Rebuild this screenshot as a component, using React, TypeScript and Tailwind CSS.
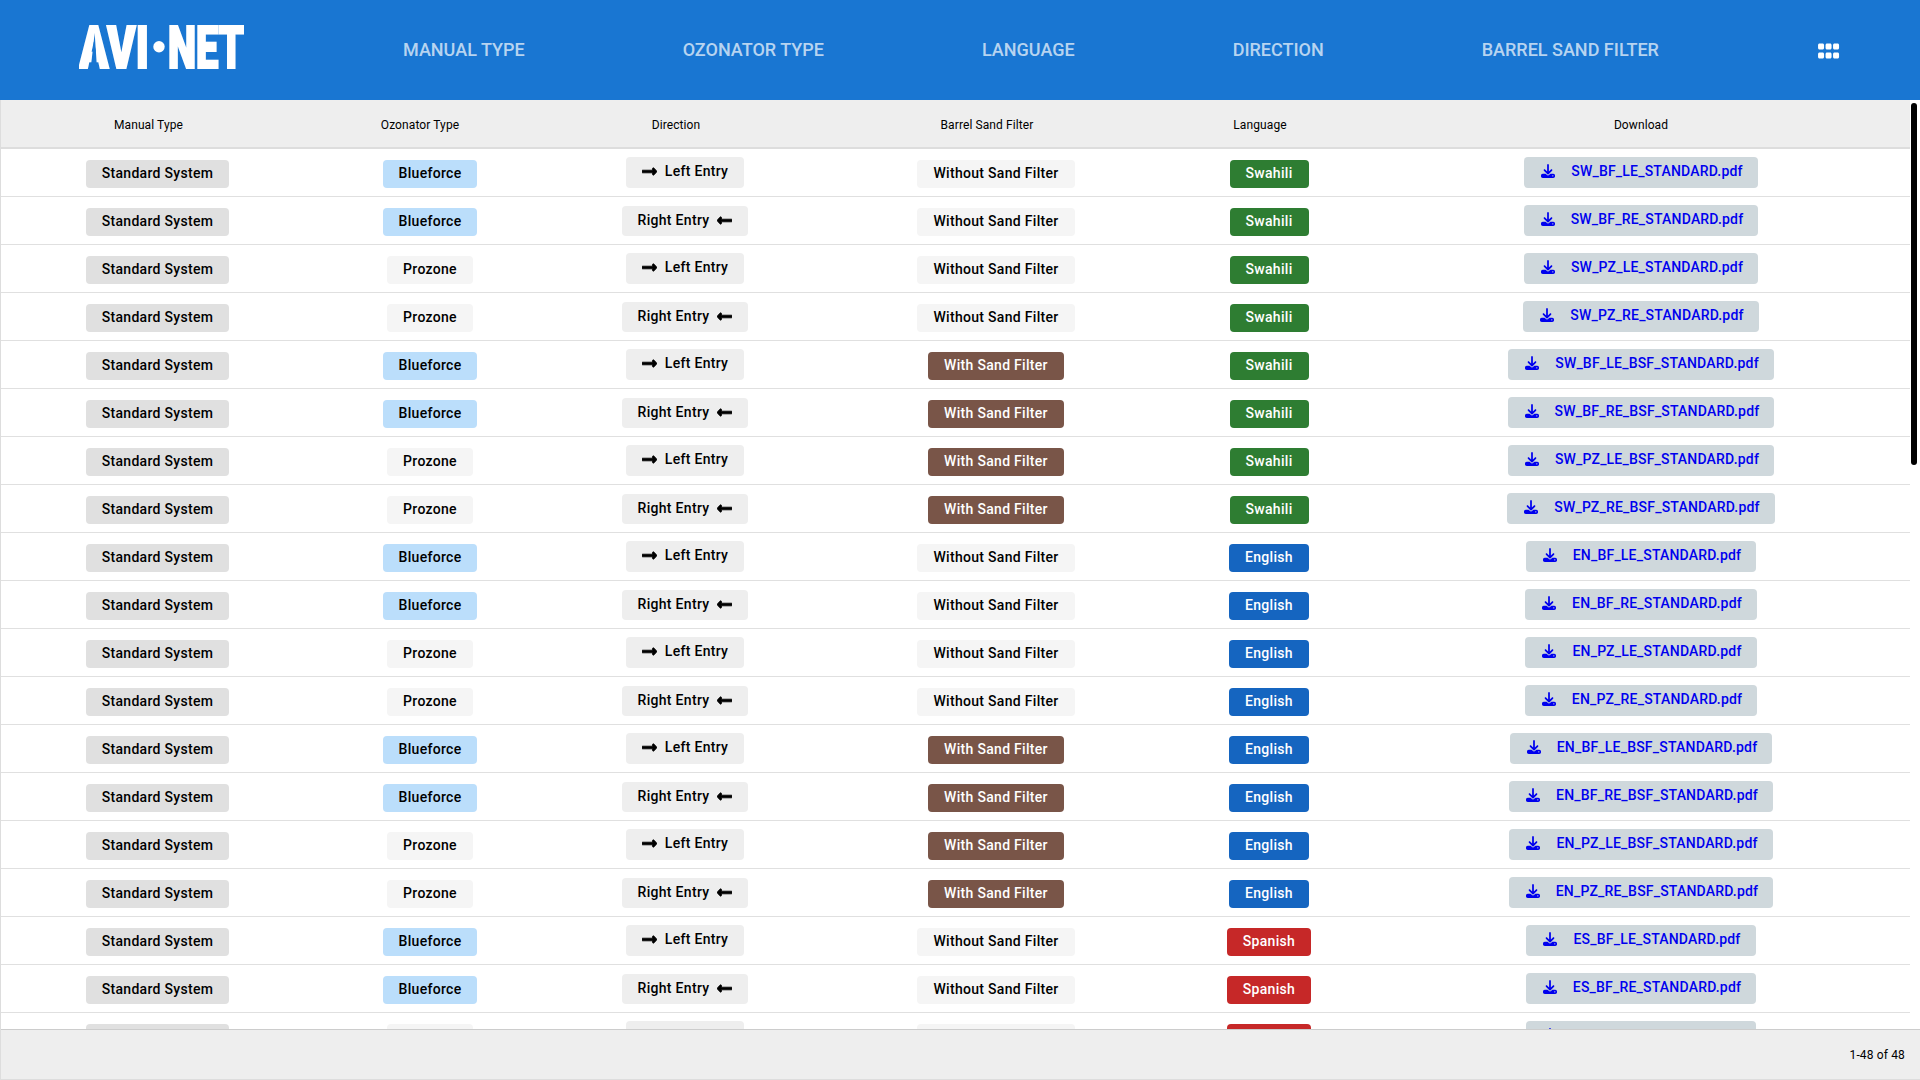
import { FaGripHorizontal, FaLongArrowAltLeft, FaLongArrowAltRight } from 'react-icons/fa';
import { FaDownload } from 'react-icons/fa6';

const NAV_ITEMS = ['Manual Type', 'Ozonator Type', 'Language', 'Direction', 'Barrel Sand Filter'];
const HEADERS = [
  { label: 'Manual Type', className: 'pr-[18px]' },
  { label: 'Ozonator Type', className: 'pr-5' },
  { label: 'Direction', className: 'pr-4' },
  { label: 'Barrel Sand Filter', className: 'pr-[18px]' },
  { label: 'Language', className: 'pr-[18px]' },
  { label: 'Download', className: 'pl-[5px]' },
];
const GRID = 'grid grid-cols-[313px_232px_276px_348px_198px_541px]';
const BADGE = 'inline-block rounded px-4 pt-[3px] pb-[5px] text-sm leading-5 font-medium tracking-[0.3px] whitespace-nowrap';

const LANGUAGES = [
  { code: 'SW', name: 'Swahili', className: 'bg-[#2e7d32] text-white' },
  { code: 'EN', name: 'English', className: 'bg-[#1565c0] text-white' },
  { code: 'ES', name: 'Spanish', className: 'bg-[#c62828] text-white' },
];

type Row = {
  language: (typeof LANGUAGES)[number];
  ozonator: 'BF' | 'PZ';
  direction: 'LE' | 'RE';
  sand: boolean;
  file: string;
};

const ROWS: Row[] = [];
for (const language of LANGUAGES) {
  for (const sand of [false, true]) {
    for (const ozonator of ['BF', 'PZ'] as const) {
      for (const direction of ['LE', 'RE'] as const) {
        const file = `${language.code}_${ozonator}_${direction}_${sand ? 'BSF_' : ''}STANDARD.pdf`;
        ROWS.push({ language, ozonator, direction, sand, file });
      }
    }
  }
}

function Logo() {
  return (
    <svg width="165" height="44" viewBox="0 0 165 44" className="mr-px mb-[6px] shrink-0 overflow-hidden" role="img" aria-label="AVI·NET">
      <g fill="white" stroke="white" strokeWidth="2.5" fontSize="62" fontWeight="900">
        <text x="0" y="44" textLength="70" lengthAdjust="spacingAndGlyphs">
          AVI
        </text>
        <text x="89" y="44" textLength="76" lengthAdjust="spacingAndGlyphs">
          NET
        </text>
      </g>
      <circle cx="80" cy="21.7" r="5.7" fill="white" />
      <polygon points="11.6,44 15.7,8 18,44" fill="#1976d2" />
    </svg>
  );
}

function DirectionBadge({ direction }: { direction: 'LE' | 'RE' }) {
  if (direction === 'LE') {
    return (
      <span className="inline-flex items-center gap-2 rounded bg-[#eeeeee] px-4 pt-1 pb-[7px] text-sm leading-5 font-medium tracking-[0.3px] whitespace-nowrap text-black">
        <FaLongArrowAltRight stroke="currentColor" strokeWidth={24} className="h-[17px] w-[15px]" />
        Left Entry
      </span>
    );
  }
  return (
    <span className="mt-px inline-flex items-center gap-2 rounded bg-[#eeeeee] px-4 pt-1 pb-[6px] text-sm leading-5 font-medium tracking-[0.3px] whitespace-nowrap text-black">
      Right Entry
      <FaLongArrowAltLeft stroke="currentColor" strokeWidth={24} className="h-[17px] w-[15px]" />
    </span>
  );
}

function TableRow({ row }: { row: Row }) {
  return (
    <div className={`${GRID} h-12 border-b border-[#e0e0e0]`}>
      <div className="flex items-start justify-center pt-[11px]">
        <span className={`${BADGE} bg-[#e0e0e0] text-black`}>Standard System</span>
      </div>
      <div className="flex items-start justify-center pt-[11px]">
        {row.ozonator === 'BF' ? (
          <span className={`${BADGE} bg-[#bbdefb] text-black`}>Blueforce</span>
        ) : (
          <span className={`${BADGE} bg-[#f5f5f5] text-black`}>Prozone</span>
        )}
      </div>
      <div className="flex items-start justify-center pt-2 pl-[2px]">
        <DirectionBadge direction={row.direction} />
      </div>
      <div className="flex items-start justify-center pt-[11px]">
        {row.sand ? (
          <span className={`${BADGE} bg-[#795548] text-white`}>With Sand Filter</span>
        ) : (
          <span className={`${BADGE} bg-[#f5f5f5] text-black`}>Without Sand Filter</span>
        )}
      </div>
      <div className="flex items-start justify-center pt-[11px]">
        <span className={`${BADGE} ${row.language.className}`}>{row.language.name}</span>
      </div>
      <div className="flex items-start justify-center pt-2 pl-[5px]">
        <a
          href="#"
          className="inline-flex items-center gap-4 rounded bg-[#cfd8dc] pt-1 pr-[15px] pb-[7px] pl-[17px] text-sm leading-5 font-medium tracking-[0.2px] whitespace-nowrap text-[#0000ee]"
        >
          <FaDownload size={14} />
          {row.file}
        </a>
      </div>
    </div>
  );
}

export default function App() {
  return (
    <div className="flex h-screen flex-col overflow-hidden bg-white [font-family:Roboto,sans-serif]">
      <header className="flex h-[100px] shrink-0 items-center gap-[158px] bg-[#1976d2] pr-20 pl-[79px]">
        <Logo />
        {NAV_ITEMS.map((item) => (
          <span key={item} className="text-lg font-medium whitespace-nowrap text-white/70 uppercase">
            {item}
          </span>
        ))}
        <FaGripHorizontal size={24} className="mt-[2px] ml-auto text-white" />
      </header>

      <main className="flex min-h-0 flex-1 flex-col border-b border-l border-[#dddddd]">
        <div className="relative min-h-0 flex-1">
          <div className="h-full overflow-y-auto pr-[10px] [scrollbar-width:none]">
            <div className={`${GRID} sticky top-0 z-10 h-[49px] items-center border-b-2 border-[#dddddd] bg-[#eeeeee] pt-[3px] text-xs tracking-[0.1px] text-black`}>
              {HEADERS.map((header) => (
                <div key={header.label} className={`${header.className} text-center`}>
                  {header.label}
                </div>
              ))}
            </div>
            {ROWS.map((row) => (
              <TableRow key={row.file} row={row} />
            ))}
          </div>
          <div className="absolute top-[3px] right-[3px] h-[362px] w-[6px] rounded-full bg-black" />
        </div>
        <footer className="flex h-[50px] shrink-0 items-center justify-end border-t border-[#cccccc] bg-[#eeeeee] pr-[15px] text-xs tracking-[0.15px] text-black">
          1-48 of 48
        </footer>
      </main>
    </div>
  );
}
